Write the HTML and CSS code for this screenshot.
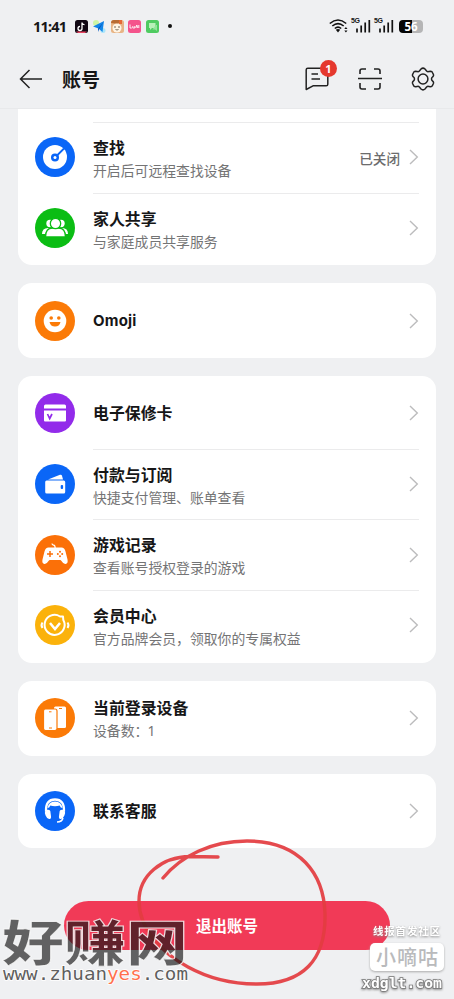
FILE: index.html
```html
<!DOCTYPE html>
<html lang="zh-CN">
<head>
<meta charset="utf-8">
<title>账号</title>
<link rel="stylesheet" href="styles.css">
</head>
<body>
<svg class="defs" width="0" height="0"><defs>
  <symbol id="chev" viewBox="0 0 10 16"><path d="M1 1l7.3 7L1 15" fill="none" stroke="#bcbcbd" stroke-width="1.4"/></symbol>
  <symbol id="bars" viewBox="0 0 18 16"><path d="M4 10.5v4M8.2 7.5v7M12.2 4.500v10M16.300 2v12.500" fill="none" stroke="#111" stroke-width="1.7"/></symbol>
</defs></svg>
<div class="screen">
  <div class="status">
    <span class="clock">11:41</span>
    <div class="apps">
      <svg viewBox="0 0 13 13"><rect width="13" height="13" rx="2.500" fill="#100713"/><path d="M1 11.500h11l-2 1.500H3z" fill="#e94561"/><path d="M7 2.500v6a2 2 0 1 1-2-2M7 2.700q.5 2 2.500 2" fill="none" stroke="#fff" stroke-width="1.300"/></svg>
      <svg viewBox="0 0 13 13"><circle cx="3" cy="3" r="3" fill="#cff5a5"/><circle cx="10" cy="10.500" r="2.500" fill="#a9e5fa"/><path d="M0 6.500L11 1 9.500 12 5.500 8.500z" fill="#1285e8"/><path d="M5 8.500L10.500 2 6 9.500 5 12z" fill="#075ac0"/></svg>
      <svg viewBox="0 0 13 13"><rect width="13" height="13" rx="2.500" fill="#e8b485"/><path d="M0 3q0-3 3-3h7l-3 4z" fill="#b86b32"/><circle cx="6" cy="8" r="4.500" fill="#fff4e4"/><path d="M8 0h3v4H8z" fill="#e46a35"/><circle cx="4" cy="7" r=".7" fill="#432"/><circle cx="8" cy="7" r=".7" fill="#432"/><path d="M4.500 9.500q1.500 1 3 0" fill="none" stroke="#432" stroke-width=".7"/></svg>
      <svg viewBox="0 0 13 13"><rect width="13" height="13" rx="2.500" fill="#f4548c"/><path d="M2 4.500v3.500h1.800m1-2v2h2v-2m1 2l1-3 1 3m1-3v3" fill="none" stroke="#fff" stroke-width=".9"/></svg>
      <svg viewBox="0 0 13 13"><rect width="13" height="13" rx="2.500" fill="#4fcb61"/><path d="M3 3h6.500v5H6L4 10V8H3z" fill="#b8f0b9"/><path d="M10 5h1v6L9 9.500H6.500" fill="#93e39b"/></svg>
    </div>
    <i class="dot"></i>
    <div class="signals">
      <svg width="20" height="16" viewBox="0 0 20 16"><g fill="none" stroke="#111" stroke-width="1.600"><path d="M.8 5.500q8.200-7 16.400 0M3.300 8q5.700-4.800 11.400 0M5.800 10.500q3.200-2.600 6.400 0"/></g><path d="M6.800 11.800q2.200-1.600 4.400 0L9 14.500z" fill="#111"/><path d="M15.300 11l1.600-2 1.600 2zM15.300 12.500l1.600 2 1.600-2z" fill="#111"/></svg>
      <span class="cell"><b>5G</b><svg width="18" height="16"><use href="#bars"/></svg></span>
      <span class="cell"><b>5G</b><svg width="18" height="16"><use href="#bars"/></svg></span>
      <span class="battery">56</span>
    </div>
  </div>
  <header>
    <svg class="back" width="24" height="20" viewBox="0 0 24 20"><path d="M23 10H1.500M10.500 1L1.500 10l9 9" fill="none" stroke="#222" stroke-width="1.500"/></svg>
    <h1>账号</h1>
    <div class="tools">
      <div class="message"><svg width="24" height="24" viewBox="0 0 24 24"><path d="M1.200 22.500V2.800q0-1.600 1.600-1.600h18.400q1.600 0 1.600 1.600v14.400q0 1.600-1.600 1.600H8zM6.500 7h6.500M6.500 12h8.500" fill="none" stroke="#222" stroke-width="1.500" stroke-linejoin="round"/></svg><span class="badge">1</span></div>
      <svg width="24" height="24" viewBox="0 0 24 24"><path d="M2 7V4q0-2 2-2h4M16 2h4q2 0 2 2v3M2 16v4q0 2 2 2h4M16 22h4q2 0 2-2v-4M0 11.500h24" fill="none" stroke="#222" stroke-width="1.600"/></svg>
      <svg width="24" height="24" viewBox="0 0 24 24"><path d="M10 2q2-1.800 4 0l1.600 2q.8.800 2 .6l2-.3q1.500 0 2 1.500l.8 1.700q.5 1.300-.7 2.300-2.400 2.200 0 4.400 1.200 1 .7 2.300l-.8 1.700q-.6 1.500-2 1.500l-2-.3q-1.200-.2-2 .6L14 22q-2 1.800-4 0l-1.600-2q-.8-.8-2-.6l-2 .3q-1.500 0-2-1.500l-.8-1.700q-.5-1.300.7-2.300 2.400-2.200 0-4.400-1.200-1-.7-2.300l.8-1.700q.6-1.500 2-1.500l2 .3q1.200.2 2-.6z" fill="none" stroke="#222" stroke-width="1.500"/><circle cx="12" cy="12" r="4.900" fill="none" stroke="#222" stroke-width="1.500"/></svg>
    </div>
  </header>
  <main>
    <section class="card first">
      <div class="row line">
        <svg class="ico" viewBox="0 0 40 40"><circle cx="20" cy="20" r="20" fill="#0a66f7"/><circle cx="20" cy="20" r="12" fill="#fff"/><circle cx="20" cy="20.500" r="4" fill="#0a66f7"/><path d="M20 20.500l9-9" stroke="#0a66f7" stroke-width="1.800"/><circle cx="20" cy="20.500" r="1.500" fill="#fff"/></svg>
        <div class="txt pair"><h2>查找</h2><p>开启后可远程查找设备</p></div><span class="state">已关闭</span><svg class="chev"><use href="#chev"/></svg>
      </div>
      <div class="row line">
        <svg class="ico" viewBox="0 0 40 40"><circle cx="20" cy="20" r="20" fill="#0bbd14"/><g fill="#fff"><circle cx="15" cy="15.500" r="3.700"/><circle cx="26" cy="15.500" r="3.700"/><path d="M7 26q0-6 6-6h14q6 0 6 6z"/></g><g fill="#fff" stroke="#0bbd14" stroke-width="1.300"><path d="M10.500 29q0-9 7-9h6q7 0 7 9z"/><circle cx="20.500" cy="15.500" r="5.200"/></g></svg>
        <div class="txt pair"><h2>家人共享</h2><p>与家庭成员共享服务</p></div><svg class="chev"><use href="#chev"/></svg>
      </div>
    </section>
    <section class="card">
      <div class="row">
        <svg class="ico" viewBox="0 0 40 40"><circle cx="20" cy="20" r="20" fill="#fb7a07"/><circle cx="20" cy="20" r="11.300" fill="#fff"/><g fill="#fb7a07"><circle cx="16.200" cy="17" r="1.800"/><circle cx="23.800" cy="17" r="1.800"/><path d="M14.500 21h11q-1 4.500-5.500 4.500T14.500 21z"/></g></svg>
        <div class="txt"><h2 class="latin">Omoji</h2></div><svg class="chev"><use href="#chev"/></svg>
      </div>
    </section>
    <section class="card">
      <div class="row">
        <svg class="ico" viewBox="0 0 40 40"><circle cx="20" cy="20" r="20" fill="#922bea"/><path d="M10.500 11.500h19q1.500 0 1.500 1.500v2.500H9V13q0-1.500 1.500-1.500zM9 17.500h22v10q0 1-1 1H10q-1 0-1-1z" fill="#fff"/><path d="M12.500 21l2.200 4.500L17 21" fill="none" stroke="#922bea" stroke-width="1.700"/></svg>
        <div class="txt"><h2>电子保修卡</h2></div><svg class="chev"><use href="#chev"/></svg>
      </div>
      <div class="row line">
        <svg class="ico" viewBox="0 0 40 40"><circle cx="20" cy="20" r="20" fill="#0a66f7"/><path d="M13 15.500l12-4.700q1.500-.5 2 1l1 3.700z" fill="#fff"/><rect x="10.200" y="16.500" width="20" height="13" rx="1.500" fill="#fff"/><rect x="25.700" y="21" width="2.400" height="4" rx="1" fill="#0a66f7"/></svg>
        <div class="txt pair"><h2>付款与订阅</h2><p>快捷支付管理、账单查看</p></div><svg class="chev"><use href="#chev"/></svg>
      </div>
      <div class="row line">
        <svg class="ico" viewBox="0 0 40 40"><circle cx="20" cy="20" r="20" fill="#fb7008"/><path d="M17 8.500q0 1.500 1.600 1.700 1.600.3 1.600 3" fill="none" stroke="#fff" stroke-width="1.200"/><path d="M13.500 12.500h13q3 0 4 4l2 8q.8 4-2 4.500-2 .3-4-3l-1-1h-11l-1 1q-2 3.300-4 3-2.800-.5-2-4.500l2-8q1-4 4-4z" fill="#fff"/><path d="M15 16v6M12 19h6" stroke="#fb7008" stroke-width="1.500"/><g fill="#fb7008"><circle cx="25" cy="16.800" r="1"/><circle cx="25" cy="21.200" r="1"/><circle cx="22.800" cy="19" r="1"/><circle cx="27.200" cy="19" r="1"/></g></svg>
        <div class="txt pair"><h2>游戏记录</h2><p>查看账号授权登录的游戏</p></div><svg class="chev"><use href="#chev"/></svg>
      </div>
      <div class="row line">
        <svg class="ico" viewBox="0 0 40 40"><circle cx="20" cy="20" r="20" fill="#fbb20b"/><g fill="none" stroke="#fff"><path d="M25 11.500a10 10 0 1 0 3.300 3.500l-.3-3.500z" stroke-width="2" stroke-linejoin="round"/><path d="M15 18l5 6 5-6" stroke-width="2.500"/><path d="M7.500 17.500q-2 2.800 0 5.500M32.500 17.500q2 2.800 0 5.500" stroke-width="2"/></g></svg>
        <div class="txt pair"><h2>会员中心</h2><p>官方品牌会员，领取你的专属权益</p></div><svg class="chev"><use href="#chev"/></svg>
      </div>
    </section>
    <section class="card">
      <div class="row">
        <svg class="ico" viewBox="0 0 40 40"><circle cx="20" cy="20" r="20" fill="#fb7a07"/><rect x="19" y="8.500" width="12" height="21.500" rx="1.500" fill="#fff"/><path d="M24 10.500h3" stroke="#fb7a07"/><rect x="8.500" y="11" width="13.500" height="21.500" rx="2" fill="#fff" stroke="#fb7a07" stroke-width="1.200"/><path d="M14 13.800h2.500M14 30h3" stroke="#fb7a07" stroke-width="1"/></svg>
        <div class="txt pair"><h2>当前登录设备</h2><p>设备数：<span class="num">1</span></p></div><svg class="chev"><use href="#chev"/></svg>
      </div>
    </section>
    <section class="card">
      <div class="row">
        <svg class="ico" viewBox="0 0 40 40"><circle cx="20" cy="20" r="20" fill="#0a66f7"/><path d="M11 20.500q-.5-12 9-12t9 12" fill="none" stroke="#fff" stroke-width="2.300"/><path d="M12.500 17q1-6.500 7.500-6.500t7.500 6.500q-2 0-2.800-2.500-4.700 1.500-9.400 0-.8 2.500-2.800 2.500z" fill="#fff"/><path d="M10.500 19q4-1 4.800 1l.8 6q0 2.500-2 2-2.500-.7-3.500-3.500-1.300-3-.1-5.500zM29.500 19q-4-1-4.800 1l-.8 6q0 2.500 2 2 2.500-.7 3.500-3.500 1.300-3 .1-5.500z" fill="#fff"/><path d="M28 27q-1 4-6 4" fill="none" stroke="#fff" stroke-width="1.500"/></svg>
        <div class="txt"><h2>联系客服</h2></div><svg class="chev"><use href="#chev"/></svg>
      </div>
    </section>
    <button class="logout">退出账号</button>
  </main>
  <svg class="overlay" viewBox="0 0 454 999">
    <path class="pen" d="M218 857L190 856.500C162 857 139 875 139 901C139 929 162 953 188 967C208 978 230 984 257 984C303 984 326 960 325 914C324 874 300 841 247 841C211 841 181 856 163 878"/>
    <g class="mark-left">
      <text class="mark-name" transform="translate(2 961) scale(1 .81)" textLength="186" lengthAdjust="spacingAndGlyphs">好赚网</text>
      <text class="mark-url" x="3" y="980" textLength="185" lengthAdjust="spacingAndGlyphs">www.zhuan<tspan>yes</tspan>.com</text>
    </g>
    <g class="mark-right">
      <text class="tagline" x="373" y="935" textLength="67">线报首发社区</text>
      <rect x="370" y="943" width="74" height="28" rx="5"/>
      <text class="brand" x="376" y="965" textLength="62">小嘀咕</text>
      <text class="domain" x="362" y="988" textLength="80" lengthAdjust="spacingAndGlyphs">xdglt.com</text>
    </g>
  </svg>
</div>
</body>
</html>
```
FILE: styles.css
```css
* { box-sizing: border-box; }
body { margin: 0; font-family: "Noto Sans CJK SC", sans-serif; color: #161617; }
h1, h2, p { margin: 0; }
svg { display: block; flex: none; }
.defs { position: absolute; }
.screen { position: relative; width: 454px; height: 999px; overflow: hidden; background: #eff0f2; display: flex; flex-direction: column; }
.status { height: 50px; padding: 2px 31px 0 33px; display: flex; align-items: center; }
.clock { width: 42px; font: 700 14.500px "Noto Sans", sans-serif; letter-spacing: -0.8px; white-space: nowrap; }
.apps { display: flex; gap: 4.800px; }
.apps svg { width: 13px; height: 13px; }
.dot { width: 4px; height: 4px; margin-left: 9px; border-radius: 50%; background: #111; }
.signals { display: flex; align-items: center; margin-left: auto; }
.signals > svg { margin-right: 1px; }
.cell { position: relative; width: 23px; padding-left: 3px; }
.cell b { position: absolute; left: 1px; top: -1px; font: 700 7px/8px "Liberation Sans", sans-serif; letter-spacing: -0.5px; }
.battery { width: 24px; height: 13px; margin-left: 3px; border-radius: 4px; background: linear-gradient(90deg, #050505 56%, #b5b5b6 56%); color: #fff; font: 700 11.500px/13px "Noto Sans", sans-serif; text-align: center; }
header { height: 59px; padding: 0 19px; display: flex; align-items: center; border-bottom: 1px solid #e8e9eb; }
h1 { margin-left: 19px; font-size: 19px; line-height: 28px; font-weight: 700; }
.tools { display: flex; gap: 29px; margin-left: auto; }
.message { position: relative; }
.badge { position: absolute; left: 15px; top: -7px; width: 17px; height: 17px; border-radius: 50%; background: #e5382e; color: #fff; font: 700 11px/17px "Noto Sans", sans-serif; text-align: center; }
main { padding: 0 18px; display: flex; flex-direction: column; gap: 18px; }
.card { padding: 2px 17px; border-radius: 14px; background: #fff; }
.first { padding-top: 13px; border-radius: 0 0 14px 14px; }
.row { height: 70.700px; display: grid; grid-template-columns: 40px 1fr auto 10px; align-items: center; position: relative; }
.line::before { content: ""; position: absolute; left: 58px; right: 0; top: 0; height: 1px; background: #ebebec; }
.ico { width: 40px; height: 40px; }
.txt { padding-left: 18px; }
.pair { padding-top: 3px; }
h2 { font-size: 15.900px; line-height: 22px; font-weight: 700; }
.latin { font-family: Inter, sans-serif; font-size: 15px; letter-spacing: 0.2px; }
p { font-size: 13.850px; line-height: 22px; color: #747475; white-space: nowrap; }
.num { margin-left: -1px; font-family: "Noto Sans", sans-serif; }
.state { margin-right: 9px; padding-top: 1px; font-size: 13.600px; font-weight: 500; color: #6c6c6d; }
.chev { grid-column: 4; width: 10px; height: 16px; }
.logout { align-self: center; width: 326px; height: 49px; margin-top: 35px; padding: 0 0 2px; border: 0; border-radius: 25px; background: #f13a57; color: #fff; font: 700 15.500px "Noto Sans CJK SC", sans-serif; }
.overlay { position: absolute; inset: 0; width: 454px; height: 999px; pointer-events: none; }
.pen { fill: none; stroke: #e33c41; stroke-width: 3.400; stroke-linecap: round; opacity: .93; }
.mark-name { font-size: 61px; font-weight: 900; fill: rgba(20, 20, 20, .65); stroke: rgba(250, 250, 250, .85); stroke-width: 1.200px; }
.mark-url { font: 400 17px/1 "DejaVu Sans Mono", monospace; fill: #5f5f60; stroke: #fff; stroke-width: 1.500px; paint-order: stroke; }
.mark-url tspan { fill: #ff704d; }
.mark-right text { fill: #fff; filter: drop-shadow(0 1px 1px #888); }
.mark-right rect { fill: #fff; filter: drop-shadow(0 1px 1px #aaa); }
.mark-right .tagline { font-size: 10.500px; font-weight: 700; }
.mark-right .brand { font-size: 20px; font-weight: 500; fill: #b9babc; filter: none; }
.mark-right .domain { font: 700 14px "DejaVu Sans Mono", monospace; stroke: #777; stroke-width: 1.500px; paint-order: stroke; }
```
